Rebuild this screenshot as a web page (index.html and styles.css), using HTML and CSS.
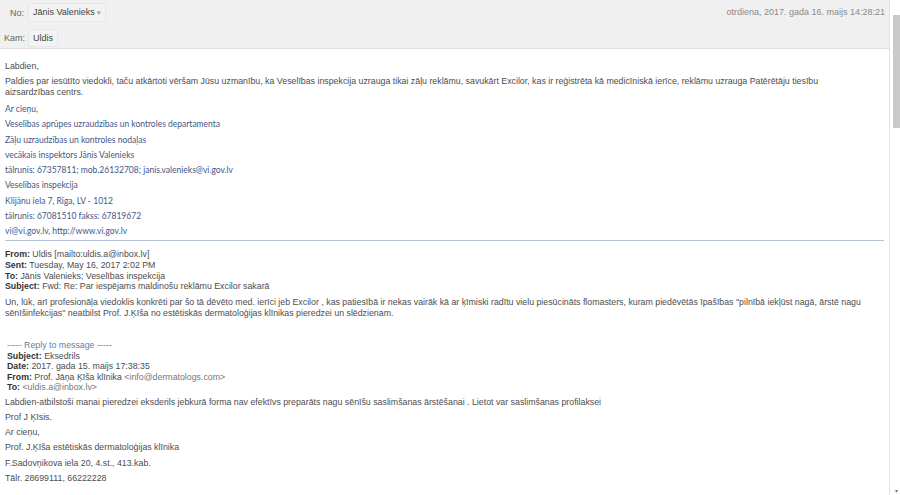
FILE: index.html
```html
<!DOCTYPE html>
<html lang="lv">
<head>
  <meta charset="UTF-8">
  <title>Vēstule</title>
  <link rel="stylesheet" href="styles.css">
</head>
<body>
  <div class="window">
    <div class="pane">
      <div class="head">
        <div class="head-rows">
          <div class="head-row">
            <span class="label label-from">No:</span>
            <span class="chip">Jānis Valenieks <span class="caret">&#9662;</span></span>
          </div>
          <div class="head-row">
            <span class="label">Kam:</span>
            <span class="chip">Uldis</span>
          </div>
        </div>
        <div class="date">otrdiena, 2017. gada 16. maijs 14:28:21</div>
      </div>

      <div class="msg">
        <div class="intro">
          <p>Labdien,</p>
          <p>Paldies par iesūtīto viedokli, taču atkārtoti vēršam Jūsu uzmanību, ka Veselības inspekcija uzrauga tikai zāļu reklāmu, savukārt Excilor, kas ir reģistrēta kā medicīniskā ierīce, reklāmu uzrauga Patērētāju tiesību aizsardzības centrs.</p>
        </div>

        <div class="sig">
          <p>Ar cieņu,</p>
          <p>Veselības aprūpes uzraudzības un kontroles departamenta</p>
          <p>Zāļu uzraudzības un kontroles nodaļas</p>
          <p>vecākais inspektors Jānis Valenieks</p>
          <p>tālrunis: 67357811; mob.26132708; janis.valenieks@vi.gov.lv</p>
          <p>Veselības inspekcija</p>
          <p>Klijānu iela 7, Rīga, LV - 1012</p>
          <p>tālrunis: 67081510 fakss: 67819672</p>
          <p>vi@vi.gov.lv, http://www.vi.gov.lv</p>
        </div>

        <hr class="rule">

        <div class="fwd-head">
          <div><b>From:</b> Uldis [mailto:uldis.a@inbox.lv]</div>
          <div><b>Sent:</b> Tuesday, May 16, 2017 2:02 PM</div>
          <div><b>To:</b> Jānis Valenieks; Veselības inspekcija</div>
          <div><b>Subject:</b> Fwd: Re: Par iespējams maldinošu reklāmu Excilor sakarā</div>
        </div>
        <p class="fwd-text">Un, lūk, arī profesionāļa viedoklis konkrēti par šo tā dēvēto med. ierīci jeb Excilor , kas patiesībā ir nekas vairāk kā ar ķīmiski radītu vielu piesūcināts flomasters, kuram piedēvētās īpašības "pilnībā iekļūst nagā, ārstē nagu sēnīšinfekcijas" neatbilst Prof. J.Ķīša no estētiskās dermatoloģijas klīnikas pieredzei un slēdzienam.</p>

        <div class="reply">
          <div class="reply-title">----- Reply to message -----</div>
          <div><b>Subject:</b> Eksedrils</div>
          <div><b>Date:</b> 2017. gada 15. maijs 17:38:35</div>
          <div><b>From:</b> Prof. Jāņa Ķīša klīnika <span class="addr">&lt;info@dermatologs.com&gt;</span></div>
          <div><b>To:</b> <span class="addr">&lt;uldis.a@inbox.lv&gt;</span></div>
        </div>
        <div class="reply-body">
          <p>Labdien-atbilstoši manai pieredzei eksderils jebkurā forma nav efektīvs preparāts nagu sēnīšu saslimšanas ārstēšanai . Lietot var saslimšanas profilaksei</p>
          <p>Prof J Ķīsis.</p>
          <p>Ar cieņu,</p>
          <p>Prof. J.Ķīša estētiskās dermatoloģijas klīnika</p>
          <p>F.Sadovņikova iela 20, 4.st., 413.kab.</p>
          <p>Tālr. 28699111, 66222228</p>
        </div>
      </div>
    </div>
    <div class="scrollbar">
      <div class="thumb"></div>
      <div class="arrow">&#9662;</div>
    </div>
  </div>
</body>
</html>
```

FILE: styles.css
```css
html, body {
  margin: 0;
  height: 100%;
  overflow: hidden;
}
body {
  font-family: "Liberation Sans", Arial, sans-serif;
  background-color: #fff;
  color: #4d4d4d;
}
.window {
  display: flex;
  height: 495px;
}
.pane {
  flex: 1;
  border-right: 1px solid #e2e2e2;
  overflow: hidden;
}
.scrollbar {
  width: 10px;
  display: flex;
  flex-direction: column;
  align-items: flex-end;
  padding-top: 15px;
  background-color: #fff;
}
.thumb {
  width: 7px;
  height: 113px;
  background-color: #c9c9c9;
}
.arrow {
  margin-top: auto;
  font-size: 6px;
  color: #777;
  width: 7px;
  text-align: center;
  line-height: 8px;
}

/* header band */
.head {
  display: flex;
  justify-content: space-between;
  height: 48px;
  background-color: #f0f0f0;
  border-bottom: 1px solid #dedede;
  font-size: 9px;
}
.head-rows {
  padding: 4px 0 0 4px;
}
.head-row {
  display: flex;
  align-items: center;
  gap: 4px;
  height: 17px;
  margin-bottom: 8px;
}
.label {
  width: 20px;
  color: #666;
  text-align: right;
}
.chip {
  border: 1px solid #e8e8e8;
  background-color: #f3f3f3;
  padding: 2px 4px;
  color: #444;
  line-height: 12px;
}
.caret {
  color: #999;
  font-size: 7px;
}
.date {
  padding: 7px 4px 0 0;
  color: #8a8a8a;
}

/* message body */
.msg {
  padding: 12px 5px 0 5px;
  font-size: 8.8px;
}
.msg p {
  margin: 0 0 4px;
  line-height: 11px;
}
.intro {
  max-width: 850px;
}
.sig p {
  margin: 0;
  font-family: "Lato", "Open Sans", sans-serif;
  font-size: 8.5px;
  line-height: 15.25px;
  color: #3f5788;
}
.rule {
  border: none;
  border-top: 1px solid #b7c3dc;
  margin: 1px 0 8px 0;
}
.fwd-head {
  line-height: 10.7px;
}
.fwd-head b, .reply b {
  color: #333;
}
.msg p.fwd-text {
  margin-top: 5px;
}
.reply {
  margin-top: 21px;
  padding-left: 2px;
  line-height: 10.5px;
}
.reply-title {
  color: #5a7fa8;
}
.addr {
  color: #777;
}
.reply-body {
  margin-top: 2px;
}
.msg .reply-body p {
  margin: 0;
  line-height: 15.3px;
}
```
